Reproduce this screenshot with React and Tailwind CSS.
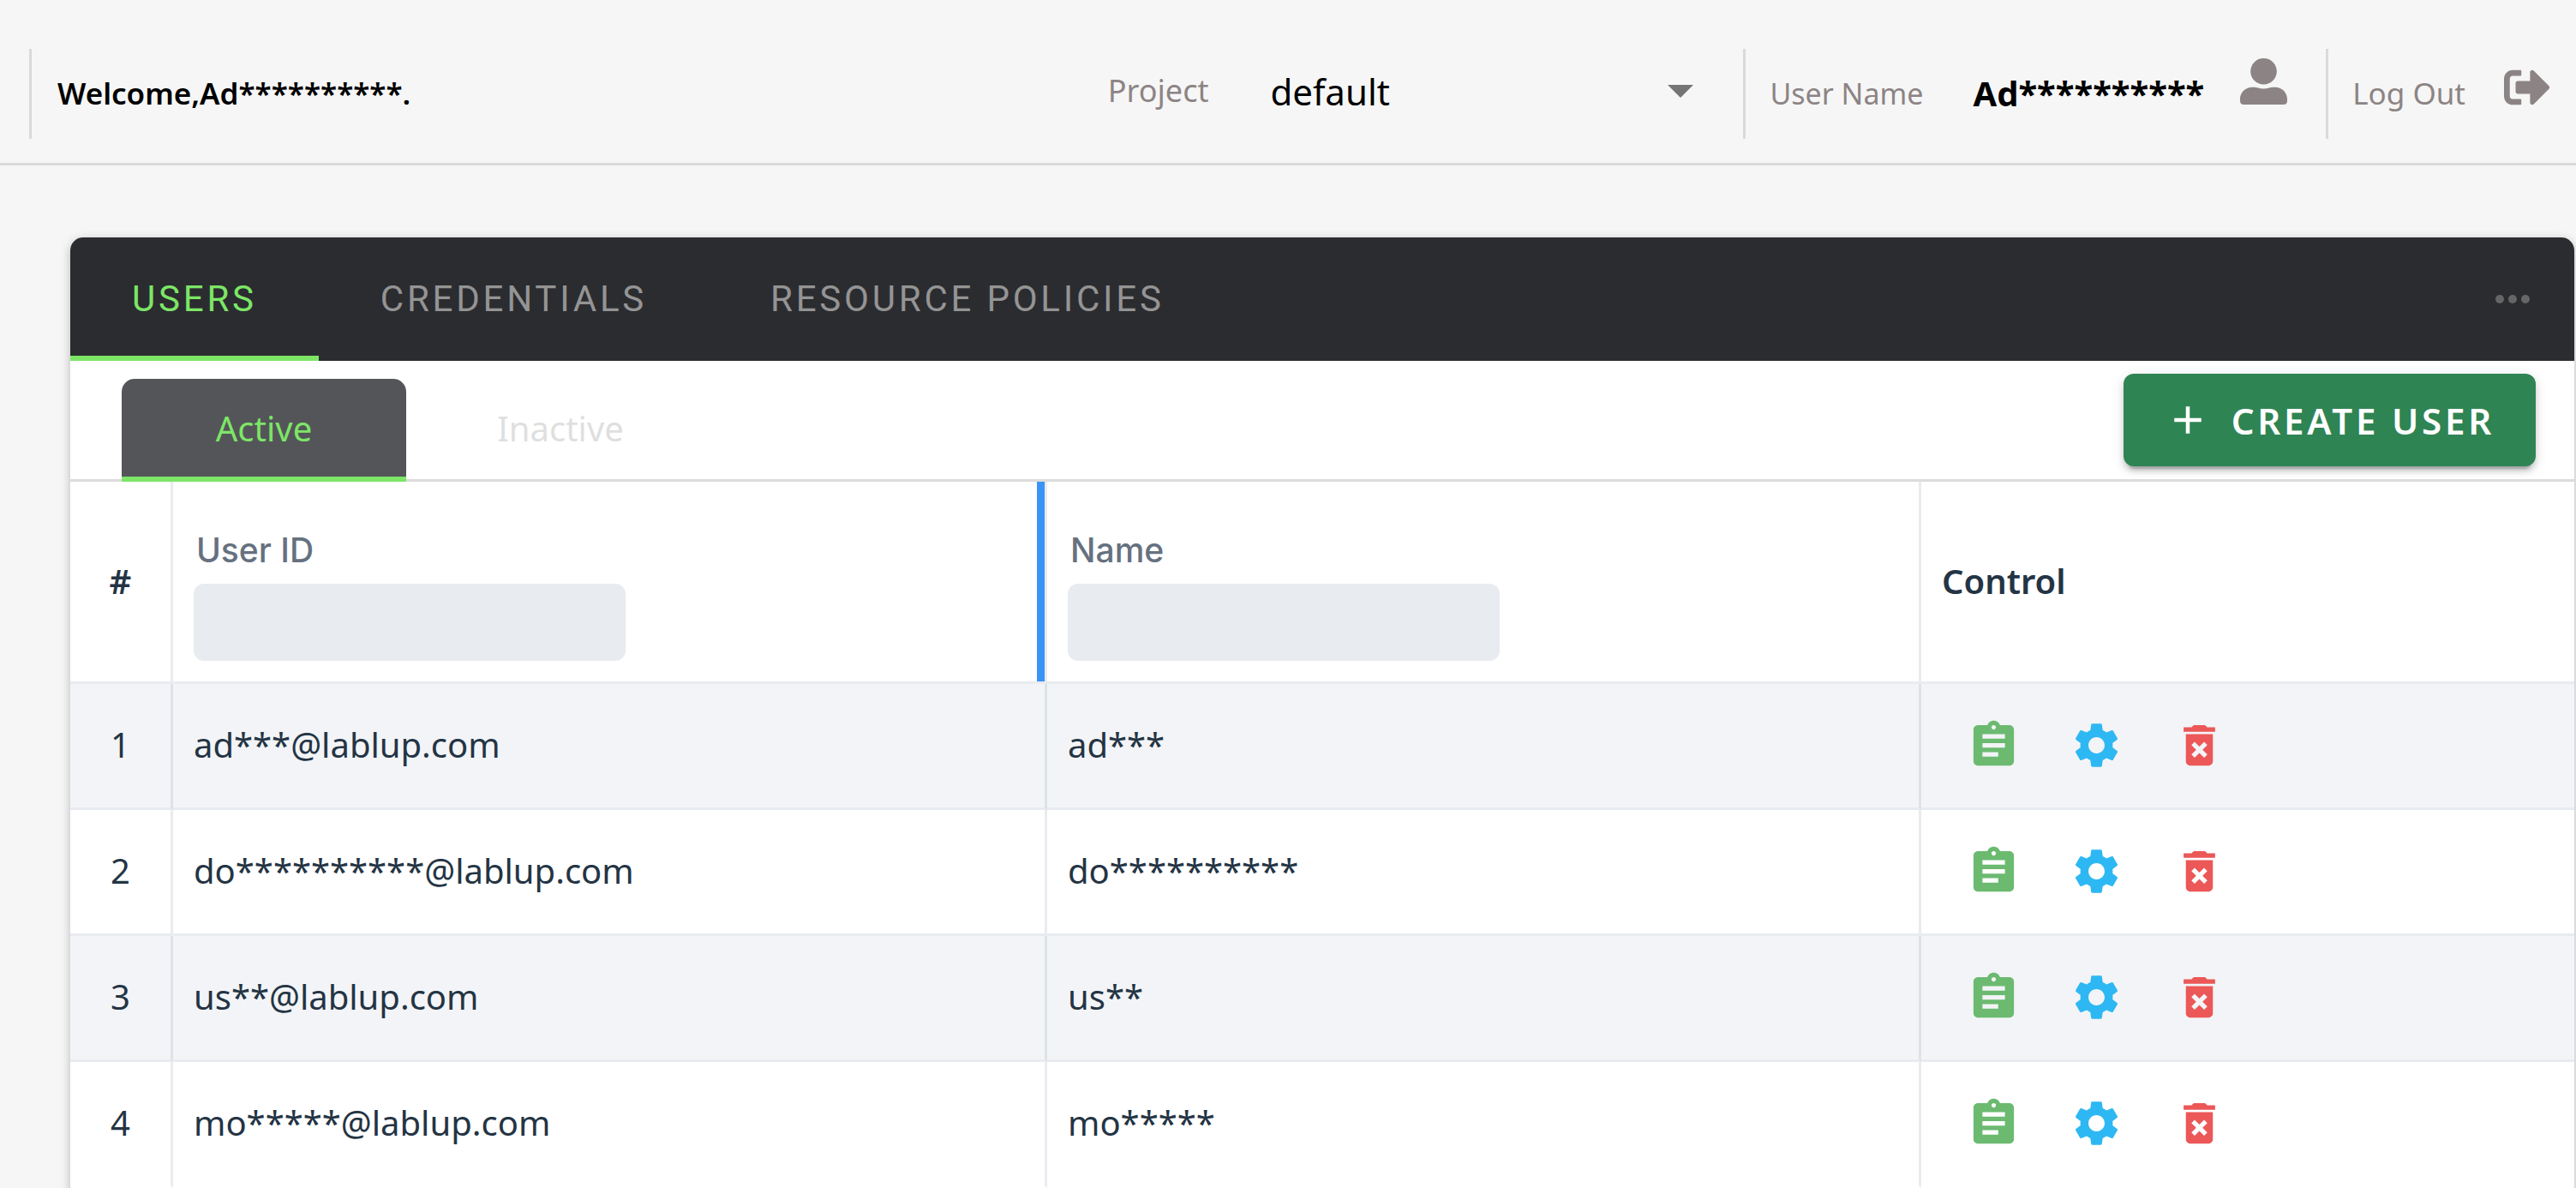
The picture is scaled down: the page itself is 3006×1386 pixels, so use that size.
import { FaSignOutAlt } from "react-icons/fa";
import { MdAssignment, MdSettings, MdDeleteForever, MdAdd } from "react-icons/md";

const users = [
  { id: "ad***@lablup.com", name: "ad***" },
  { id: "do**********@lablup.com", name: "do**********" },
  { id: "us**@lablup.com", name: "us**" },
  { id: "mo*****@lablup.com", name: "mo*****" },
];

function UserIcon() {
  return (
    <svg viewBox="0 0 55 54" className="h-[54px] w-[55px] fill-current" aria-hidden="true">
      <circle cx="27.500" cy="15.300" r="15.300" />
      <path d="M14 33.800C17 33.500 19 33.700 21 34.400C25 35.800 30 35.800 34 34.400C36 33.700 38 33.500 41 33.800C49 34 55 40 55 47.500V49.500C55 52.500 53.500 54 50.500 54H4.500C1.500 54 0 52.500 0 49.500V47.500C0 40 6 34 14 33.800Z" />
    </svg>
  );
}

function Divider() {
  return <div className="h-[105px] w-[3px] shrink-0 bg-[#dadada]" />;
}

function Header() {
  return (
    <header className="flex h-[193px] items-center border-b-3 border-[#dadada] pt-[28px] pl-[34px] text-[34px] text-[#8c8484]">
      <Divider />
      <p className="pl-[30px] text-[35px] font-semibold text-black">Welcome,Ad**********.</p>
      <div className="mb-[6px] ml-auto flex items-center">
        <label htmlFor="project" className="text-[36px]">Project</label>
        <div className="relative ml-[72px] flex items-center">
          <select id="project" className="w-[510px] appearance-none bg-transparent text-[42px] text-black">
            <option>default</option>
          </select>
          <svg viewBox="0 0 30 15" className="pointer-events-none absolute right-[16px] h-[15px] w-[30px] fill-[#757575]" aria-hidden="true">
            <path d="M0 0h30L15 15z" />
          </svg>
        </div>
      </div>
      <div className="ml-[42px] flex items-center">
        <Divider />
        <span className="pl-[28px]">User Name</span>
        <button className="ml-[58px] flex items-center gap-[42px]">
          <span className="text-[40px] font-bold text-black">Ad**********</span>
          <span className="mb-[28px] text-[#8c8484]"><UserIcon /></span>
        </button>
      </div>
      <div className="mr-[30px] ml-[45px] flex items-center">
        <Divider />
        <button className="flex items-center gap-[45px] pl-[28px] text-[35px]">
          Log Out
          <FaSignOutAlt className="mb-[14px] size-[54px]" />
        </button>
      </div>
    </header>
  );
}

function MainTabs() {
  const base = "flex h-full items-center border-b-6 px-[72px] pt-[4px]";
  return (
    <div className="flex h-[144px] items-center rounded-t-[15px] bg-[#2b2c30] font-['Roboto',sans-serif] text-[42px] tracking-[0.09em] text-[#949494]">
      <button className={base + " border-[#7de666] text-[#7de666]"}>USERS</button>
      <button className={base + " border-transparent"}>CREDENTIALS</button>
      <button className={base + " border-transparent"}>RESOURCE POLICIES</button>
      <button aria-label="More" className="mr-[52px] ml-auto flex gap-[5px]">
        <span className="size-[10px] rounded-full bg-[#666]" />
        <span className="size-[10px] rounded-full bg-[#666]" />
        <span className="size-[10px] rounded-full bg-[#666]" />
      </button>
    </div>
  );
}

function StatusBar() {
  const tab = "-mb-[3px] flex h-[120px] items-center justify-center rounded-t-[15px] border-b-6 pt-[2px] text-[40px]";
  return (
    <div className="flex h-[141px] items-end border-b-3 border-[#dcdcdc] pl-[60px]">
      <button className={tab + " w-[332px] border-[#7de666] bg-[#545559] text-[#7de666]"}>Active</button>
      <button className={tab + " w-[360px] border-transparent text-[#dfdfdf]"}>Inactive</button>
      <button className="mr-[45px] mb-[15px] ml-auto flex h-[108px] items-center rounded-[12px] bg-[#2f8454] px-[48px] text-[42px] font-semibold tracking-[0.09em] text-white shadow-[0_9px_3px_-6px_rgba(0,0,0,0.2),0_6px_6px_0_rgba(0,0,0,0.14),0_3px_15px_0_rgba(0,0,0,0.12)]">
        <MdAdd className="mr-[24px] size-[54px]" />
        CREATE USER
      </button>
    </div>
  );
}

function FilterHead({ id, label }) {
  return (
    <div className="flex flex-col items-start pt-[28px]">
      <label htmlFor={id} className="pl-[3px] font-['Inter',sans-serif] text-[39px] leading-[60px] font-medium text-[#66717f]">
        {label}
      </label>
      <input id={id} className="mt-[9px] h-[90px] w-[504px] rounded-[12px] bg-[#e8ebf0] px-4" />
    </div>
  );
}

function UserTable() {
  const th = "h-[236px] border-b-3 border-r-3 border-[#e8ebf0] px-6 pb-[2px] font-semibold last:border-r-0";
  const td = "h-[147px] border-b-3 border-b-[#e8ebf0] border-r-3 border-r-[#e8ebf0] px-6 pb-[2px] group-odd:border-r-[#dde2e8] group-last:border-b-transparent last:border-r-0";
  return (
    <table className="w-full table-fixed border-separate border-spacing-0 text-[40px] text-[#243444]">
      <colgroup>
        <col className="w-[120px]" />
        <col className="w-[1020px]" />
        <col className="w-[1020px]" />
        <col />
      </colgroup>
      <thead>
        <tr className="text-left">
          <th className={th + " text-center"}>#</th>
          <th className={th + " relative"}>
            <FilterHead id="filter-user-id" label="User ID" />
            <span className="absolute inset-y-0 right-0 w-[9px] bg-[#3b93f7]" />
          </th>
          <th className={th}><FilterHead id="filter-name" label="Name" /></th>
          <th className={th}>Control</th>
        </tr>
      </thead>
      <tbody>
        {users.map((user, i) => (
          <tr key={user.id} className="group odd:bg-[#f3f4f7]">
            <td className={td + " text-center"}>{i + 1}</td>
            <td className={td}>{user.id}</td>
            <td className={td}>{user.name}</td>
            <td className={td}>
              <div className="flex">
                <button aria-label="Details" className="flex w-[120px] justify-center text-[#6bba70]"><MdAssignment className="size-[63px]" /></button>
                <button aria-label="Settings" className="flex w-[120px] justify-center text-[#2eb8f3]"><MdSettings className="size-[63px]" /></button>
                <button aria-label="Delete" className="flex w-[120px] justify-center text-[#ec5757]"><MdDeleteForever className="size-[63px]" /></button>
              </div>
            </td>
          </tr>
        ))}
      </tbody>
    </table>
  );
}

export default function App() {
  return (
    <div className="h-screen overflow-hidden bg-[#f6f6f6] font-['Noto_Sans',sans-serif]">
      <Header />
      <main className="mt-[84px] mr-[2px] ml-[82px] rounded-[15px] bg-white pb-[60px] shadow-[0_3px_12px_rgba(0,0,0,0.25)]">
        <MainTabs />
        <StatusBar />
        <UserTable />
      </main>
    </div>
  );
}
